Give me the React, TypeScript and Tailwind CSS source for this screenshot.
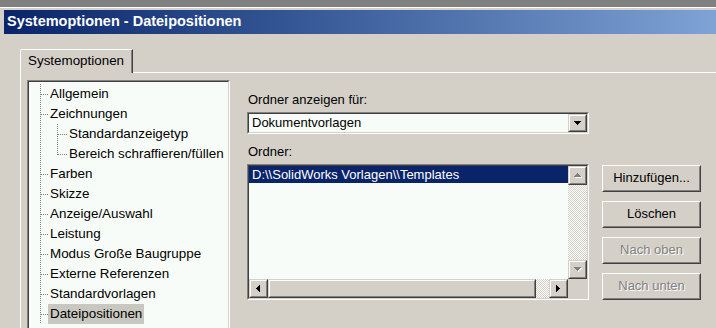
import { clsx } from "clsx";
import type { ReactNode } from "react";

type TreeNode = { label: string; level: 1 | 2; lastChild?: boolean; selected?: boolean };

const TREE: TreeNode[] = [
  { label: "Allgemein", level: 1 },
  { label: "Zeichnungen", level: 1 },
  { label: "Standardanzeigetyp", level: 2 },
  { label: "Bereich schraffieren/füllen", level: 2, lastChild: true },
  { label: "Farben", level: 1 },
  { label: "Skizze", level: 1 },
  { label: "Anzeige/Auswahl", level: 1 },
  { label: "Leistung", level: 1 },
  { label: "Modus Große Baugruppe", level: 1 },
  { label: "Externe Referenzen", level: 1 },
  { label: "Standardvorlagen", level: 1 },
  { label: "Dateipositionen", level: 1, selected: true },
];

const ARROWS = {
  down: "M0 0h7v1H0z M1 1h5v1H1z M2 2h3v1H2z M3 3h1v1H3z",
  up: "M3 0h1v1H3z M2 1h3v1H2z M1 2h5v1H1z M0 3h7v1H0z",
  left: "M3 0h1v7H3z M2 1h1v5H2z M1 2h1v3H1z M0 3h1v1H0z",
  right: "M0 0h1v7H0z M1 1h1v5H1z M2 2h1v3H2z M3 3h1v1H3z",
};

function Arrow({ dir, disabled }: { dir: keyof typeof ARROWS; disabled?: boolean }) {
  const vertical = dir === "up" || dir === "down";
  const w = vertical ? 7 : 4;
  const h = vertical ? 4 : 7;
  return (
    <svg width={w + 1} height={h + 1} shapeRendering="crispEdges">
      {disabled && <path d={ARROWS[dir]} fill="#ffffff" transform="translate(1 1)" />}
      <path d={ARROWS[dir]} fill={disabled ? "#808080" : "#000000"} />
    </svg>
  );
}

function Sunken({ className, inner, children }: { className?: string; inner?: string; children?: ReactNode }) {
  return (
    <div className={clsx("border border-t-[#808080] border-l-[#808080] border-b-white border-r-white", className)}>
      <div className={clsx("h-full w-full border border-t-[#404040] border-l-[#404040] border-b-[#d4d0c8] border-r-[#d4d0c8]", inner)}>
        {children}
      </div>
    </div>
  );
}

function Raised({ className, children, push }: { className?: string; children?: ReactNode; push?: boolean }) {
  return (
    <div
      className={clsx(
        "border border-b-[#404040] border-r-[#404040] bg-[#d4d0c8]",
        push ? "border-t-white border-l-white" : "border-t-[#d4d0c8] border-l-[#d4d0c8]",
        className,
      )}
    >
      <div
        className={clsx(
          "flex h-full w-full items-center justify-center border border-b-[#808080] border-r-[#808080]",
          push ? "border-t-[#d4d0c8] border-l-[#d4d0c8]" : "border-t-white border-l-white",
        )}
      >
        {children}
      </div>
    </div>
  );
}

function Connector({ level, lastChild }: { level: 1 | 2; lastChild?: boolean }) {
  return (
    <svg width={level === 1 ? 19 : 38} height={20} className="shrink-0" stroke="#808080" strokeDasharray="1 1" shapeRendering="crispEdges">
      <line x1={11.5} y1={0} x2={11.5} y2={20} />
      {level === 1 ? (
        <line x1={12} y1={10.5} x2={19} y2={10.5} />
      ) : (
        <>
          <line x1={28.5} y1={0} x2={28.5} y2={lastChild ? 11 : 20} />
          <line x1={29} y1={10.5} x2={38} y2={10.5} />
        </>
      )}
    </svg>
  );
}

const CHECKER = "bg-[image:repeating-conic-gradient(#d4d0c8_0%_25%,#ffffff_0%_50%)] bg-[length:2px_2px]";

function PushButton({ label, disabled }: { label: string; disabled?: boolean }) {
  return (
    <Raised push className="h-[27px] w-[99px]">
      <span className={clsx("pb-[1px]", disabled ? "text-[#808080] [text-shadow:1px_1px_0_#ffffff]" : "text-black")}>{label}</span>
    </Raised>
  );
}

export default function App() {
  return (
    <div className="flex h-[328px] w-[716px] flex-col overflow-hidden bg-[#808080] font-['Liberation_Sans',Arial,sans-serif] text-[13px] text-black">
      <div className="h-[7px] shrink-0" />
      <div className="flex flex-1 flex-col border-t border-white bg-[#d4d0c8] pl-[4px] pt-[2px]">
        <div className="flex h-[24px] shrink-0 items-center bg-linear-to-r from-[#0a246a] to-[#7fa3d5] pl-[3px] text-[14.5px] font-bold text-white">
          Systemoptionen - Dateipositionen
        </div>

        <div className="ml-[16px] mt-[15px] flex flex-1 flex-col">
          <div className="flex h-[24px] shrink-0">
            <div className="rounded-tl-[2px] border-r border-t border-l border-t-white border-l-white border-r-[#404040]">
              <div className="h-full w-[111px] border-r border-[#808080] pl-[7px] pt-[3px] text-[13.4px] leading-[15px]">Systemoptionen</div>
            </div>
            <div className="flex-1 border-b border-white" />
          </div>

          <div className="flex flex-1 border-l border-white pl-[6px] pt-[7px]">
            <Sunken className="h-[260px] w-[203px] shrink-0" inner="bg-[#f8fcf8] pt-[2px] text-[13.4px]">
              {TREE.map((n) => (
                <div key={n.label} className="flex h-[20px] items-center">
                  <Connector level={n.level} lastChild={n.lastChild} />
                  <span className={clsx("h-[20px] whitespace-nowrap px-[2px] leading-[20px]", n.selected && "bg-[#c8c8c0]")}>{n.label}</span>
                </div>
              ))}
            </Sunken>

            <div className="ml-[17px] flex flex-col pt-[12px]">
              <div className="pl-[1px] leading-[15px]">Ordner anzeigen für:</div>
              <Sunken className="mt-[5px] h-[22px] w-[342px]" inner="flex items-center bg-[#f8fcf8]">
                <span className="flex-1 pl-[3px]">Dokumentvorlagen</span>
                <Raised className="h-full w-[19px]">
                  <Arrow dir="down" />
                </Raised>
              </Sunken>

              <div className="mt-[10px] pl-[1px] leading-[15px]">Ordner:</div>

              <div className="mt-[5px] flex items-start">
                <Sunken className="h-[136px] w-[342px]" inner="grid grid-cols-[1fr_19px] grid-rows-[1fr_19px] bg-[#f8fcf8]">
                  <div>
                    <div className="h-[17px] whitespace-nowrap bg-[#0a246a] pl-[3px] leading-[17px] text-white">
                      D:\\SolidWorks Vorlagen\\Templates
                    </div>
                  </div>
                  <div className="flex flex-col">
                    <Raised className="h-[19px] w-[19px]">
                      <Arrow dir="up" disabled />
                    </Raised>
                    <div className={clsx("flex-1", CHECKER)} />
                    <Raised className="h-[19px] w-[19px]">
                      <Arrow dir="down" disabled />
                    </Raised>
                  </div>
                  <div className="flex">
                    <Raised className="h-[19px] w-[19px]">
                      <Arrow dir="left" />
                    </Raised>
                    <Raised className="h-[19px] w-[268px]" />
                    <div className={clsx("flex-1", CHECKER)} />
                    <Raised className="h-[19px] w-[19px]">
                      <Arrow dir="right" />
                    </Raised>
                  </div>
                  <div className="bg-[#d4d0c8]" />
                </Sunken>

                <div className="ml-[13px] mt-[1px] flex flex-col gap-[9px]">
                  <PushButton label="Hinzufügen..." />
                  <PushButton label="Löschen" />
                  <PushButton label="Nach oben" disabled />
                  <PushButton label="Nach unten" disabled />
                </div>
              </div>
            </div>
          </div>
        </div>
      </div>
    </div>
  );
}
